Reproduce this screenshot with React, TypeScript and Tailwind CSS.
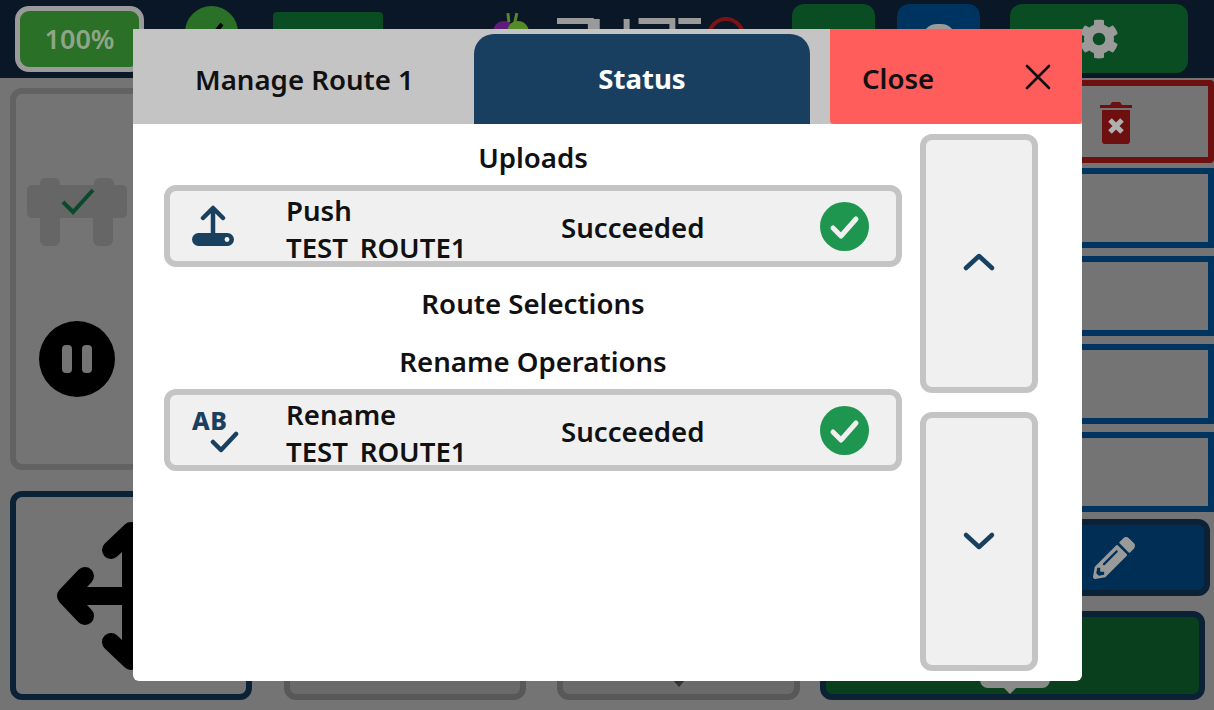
import { FaCog, FaPencilAlt } from "react-icons/fa";

const SANS = "font-['Noto_Sans',sans-serif]";

function CheckCircle() {
	return (
		<svg width="49" height="49" viewBox="0 0 49 49" aria-hidden="true">
			<circle cx="24.5" cy="24.5" r="24.5" fill="#1e9650" />
			<path d="M13 26l8 8 15-17" fill="none" stroke="#f0f0f0" strokeWidth="5" strokeLinecap="round" strokeLinejoin="round" />
		</svg>
	);
}

function UploadIcon() {
	return (
		<svg width="42" height="42" viewBox="0 0 42 42" aria-hidden="true">
			<path d="M21 28V4M11 13l10-10 10 10" fill="none" stroke="#1a4060" strokeWidth="4.5" strokeLinecap="round" strokeLinejoin="round" />
			<rect x="0" y="28" width="42" height="13" rx="6.5" fill="#1a4060" />
			<circle cx="35" cy="34.5" r="2.4" fill="#f0f0f0" />
		</svg>
	);
}

function RenameIcon() {
	return (
		<div className="relative h-[48px] w-[48px]">
			<span className="absolute left-0 top-[-1px] text-[25px] font-extrabold leading-[30px] tracking-[0.5px] text-[#1a4060]">AB</span>
			<svg className="absolute left-[18px] top-[24px]" width="30" height="24" viewBox="0 0 30 24" aria-hidden="true">
				<path d="M3 12l8 8L26 4" fill="none" stroke="#1a4060" strokeWidth="4.5" strokeLinecap="round" strokeLinejoin="round" />
			</svg>
		</div>
	);
}

function StatusRow({ icon, action }: { icon: React.ReactNode; action: string }) {
	return (
		<div className="flex h-[82px] items-center overflow-hidden rounded-[12px] border-[6px] border-[#c4c4c4] bg-[#f0f0f0]">
			<div className="flex w-[116px] justify-start pl-[22px]">{icon}</div>
			{/* the row cuts the second line off just under the letters */}
			<div className="h-[68px] w-[275px] self-start overflow-hidden text-[27.6px] font-semibold leading-[37px] text-[#111]">
				<div className="mt-[1px]">{action}</div>
				<div>TEST_ROUTE1</div>
			</div>
			<div className="mt-[2px] flex-1 text-[27.6px] font-semibold leading-[37px] text-[#111]">Succeeded</div>
			<div className="mr-[27px]">
				<CheckCircle />
			</div>
		</div>
	);
}

function ScrollButton({ d }: { d: string }) {
	return (
		<button className="flex h-[259px] w-[118px] items-center justify-center rounded-[12px] border-[6px] border-[#c4c4c4] bg-[#f0f0f0]">
			<svg width="34" height="24" viewBox="0 0 34 24" aria-hidden="true">
				<path d={d} fill="none" stroke="#1a4060" strokeWidth="4.5" strokeLinecap="round" strokeLinejoin="round" />
			</svg>
		</button>
	);
}

function Modal() {
	return (
		<div className="absolute left-[133px] top-[29px] flex h-[652px] w-[949px] flex-col overflow-hidden rounded-b-[6px] bg-white">
			<div className="flex h-[95px] items-end bg-[#c4c4c4]">
				<div className="flex h-[95px] w-[341px] items-center justify-center pl-[2px] pt-[6px] text-[27.6px] font-semibold text-[#111]">Manage Route 1</div>
				<div className="flex h-[90px] w-[336px] items-center justify-center rounded-t-[20px] bg-[#183f5f] text-[27.6px] font-bold text-white">Status</div>
				<div className="ml-[20px] flex h-[95px] w-[252px] items-center justify-between rounded-b-[4px] bg-[#ff5c5c] pl-[32px] pr-[31px] pt-[4px] text-[27.6px] font-semibold text-[#111]">
					<span>Close</span>
					<svg className="-mt-[4px]" width="26" height="26" viewBox="0 0 26 26" aria-hidden="true">
						<path d="M2 2l22 22M24 2L2 24" fill="none" stroke="#111" strokeWidth="2.6" strokeLinecap="round" />
					</svg>
				</div>
			</div>
			<div className="flex flex-1 pl-[31px]">
				<div className="w-[738px] pt-[14px] text-center text-[27.6px] font-semibold leading-[38px] text-[#111]">
					<div>Uploads</div>
					<div className="mt-[9px] text-left">
						<StatusRow icon={<UploadIcon />} action="Push" />
					</div>
					<div className="mt-[17px]">Route Selections</div>
					<div className="mt-[20px]">Rename Operations</div>
					<div className="mt-[9px] text-left">
						<StatusRow icon={<RenameIcon />} action="Rename" />
					</div>
				</div>
				<div className="ml-[18px] flex flex-col gap-[19px] pt-[10px]">
					<ScrollButton d="M4 16L17 4l13 12" />
					<ScrollButton d="M4 5l13 12L30 5" />
				</div>
			</div>
		</div>
	);
}

function TopBar() {
	return (
		<div className="flex h-[78px] items-start bg-[#091726]">
			<div className="ml-[15px] mt-[6px] flex h-[66px] w-[129px] items-center justify-center rounded-[14px] border-[5px] border-[#9a9a9a] bg-[#2a7026] text-[27px] font-semibold text-[#8fa58a]">100%</div>
			<div className="ml-[41px] mt-[6px] flex h-[53px] w-[53px] justify-center rounded-full bg-[#2a7026] pt-[14px]">
				<svg width="26" height="24" viewBox="0 0 26 24" aria-hidden="true">
					<path d="M3 13l7 7L23 4" fill="none" stroke="#000" strokeWidth="4" />
				</svg>
			</div>
			<div className="ml-[35px] mt-[12px] h-[50px] w-[110px] rounded-[4px] bg-[#0a4d22]" />
			<div className="ml-[107px] mt-[12px] flex w-[255px]">
				<svg width="42" height="40" viewBox="0 0 42 40" aria-hidden="true">
					<circle cx="14" cy="20" r="11" fill="#5e1b7a" />
					<circle cx="28" cy="20" r="11" fill="#558a28" />
					<path d="M19 10l-1-9M25 10l2-9" stroke="#558a28" strokeWidth="3" />
				</svg>
				{/* logo, only its top edge shows above the dialog */}
				<svg className="ml-[25px]" width="145" height="40" viewBox="0 0 145 40" aria-hidden="true">
					<path d="M0 9h34v30M40 7v30M70 7v30M82 9h34v30M122 9h23" fill="none" stroke="#9a9a9a" strokeWidth="6" />
				</svg>
				<div className="ml-[6px] mt-[5px] h-[38px] w-[38px] shrink-0 rounded-full border-[4px] border-[#7a1313]" />
			</div>
			<div className="ml-[47px] mt-[4px] h-[60px] w-[83px] rounded-[12px] bg-[#0a4d22]" />
			<div className="ml-[22px] mt-[4px] flex h-[60px] w-[83px] justify-center rounded-[12px] bg-[#003460] pt-[20px]">
				<div className="h-[30px] w-[34px] rounded-full bg-[#9a9a9a]" />
			</div>
			<div className="ml-[30px] mt-[4px] flex h-[69px] w-[178px] items-center justify-center rounded-[12px] bg-[#0a4d22] text-[#9a9a9a]">
				<FaCog size={40} />
			</div>
		</div>
	);
}

function Background() {
	return (
		<div className="flex h-[632px] bg-[#747474]">
			<div className="ml-[10px] flex w-[790px] flex-col pb-[10px] pt-[10px]">
				<div className="flex h-[382px] w-[500px] flex-col items-start rounded-[12px] border-[6px] border-[#626262] pl-[11px]">
					<svg className="mt-[84px]" width="100" height="68" viewBox="0 0 100 68" aria-hidden="true">
						<path d="M13 7a6 6 0 0 1 6-7h8a6 6 0 0 1 6 7h34a6 6 0 0 1 6-7h8a6 6 0 0 1 6 7h8a5 5 0 0 1 5 5v23a5 5 0 0 1-5 5H86v22a6 6 0 0 1-6 6h-8a6 6 0 0 1-6-6V40H33v22a6 6 0 0 1-6 6h-8a6 6 0 0 1-6-6V40H5a5 5 0 0 1-5-5V12a5 5 0 0 1 5-5z" fill="#666666" />
						<path d="M36 24l10 10 20-22" fill="none" stroke="#0a4a2c" strokeWidth="4" />
					</svg>
					<div className="ml-[12px] mt-[75px] flex h-[76px] w-[76px] items-center justify-center gap-[10px] rounded-full bg-black">
						<div className="h-[28px] w-[10px] rounded-[4px] bg-[#747474]" />
						<div className="h-[28px] w-[10px] rounded-[4px] bg-[#747474]" />
					</div>
				</div>
				<div className="mt-[21px] flex flex-1 items-end">
					<div className="flex h-[209px] w-[242px] items-center justify-center rounded-[12px] border-[6px] border-[#0a2136]">
						<svg width="150" height="150" viewBox="0 0 150 150" aria-hidden="true">
							<path d="M10 75h130M75 10v130M29 55L10 75l19 20M55 29L75 10l20 19M55 121l20 19 20-19M121 55l19 20-19 20" fill="none" stroke="#000" strokeWidth="18" strokeLinecap="round" strokeLinejoin="round" />
						</svg>
					</div>
					<div className="ml-[32px] h-[60px] w-[242px] rounded-[12px] border-[6px] border-[#585858] bg-[#6a6a6a]" />
					<div className="ml-[31px] flex h-[60px] w-[243px] items-end justify-center rounded-[12px] border-[6px] border-[#585858] bg-[#6a6a6a] pb-[7px]">
						<div className="h-0 w-0 border-x-[7px] border-t-[8px] border-x-transparent border-t-[#333]" />
					</div>
				</div>
			</div>
			<div className="ml-[20px] flex flex-1 flex-col pb-[10px] pt-[2px]">
				<div className="flex h-[83px] items-center justify-end rounded-[4px] border-[6px] border-[#6e1010] pr-[75px]">
					<svg width="34" height="44" viewBox="0 0 34 44" aria-hidden="true">
						<path d="M1 5h32v3H1zM11 5l2-3h8l2 3z" fill="#6e1010" />
						<path d="M3 10h28v31a3 3 0 0 1-3 3H6a3 3 0 0 1-3-3z" fill="#6e1010" />
						<path d="M11 20l12 12M23 20L11 32" stroke="#b0b0b0" strokeWidth="5" />
					</svg>
				</div>
				<div className="mt-[5px] h-[80px] border-[6px] border-[#003460]" />
				<div className="mt-[8px] h-[80px] border-[6px] border-[#003460]" />
				<div className="mt-[8px] h-[80px] border-[6px] border-[#003460]" />
				<div className="mt-[8px] h-[80px] border-[6px] border-[#003460]" />
				<div className="mr-[4px] mt-[7px] flex h-[77px] items-center justify-end rounded-[12px] border-[6px] border-[#0a2136] bg-[#002e55] pr-[69px] text-[#9a9a9a]">
					<FaPencilAlt size={42} />
				</div>
				<div className="mr-[9px] mt-[15px] flex h-[89px] items-end rounded-[12px] border-[6px] border-[#0a2136] bg-[#0a3f1e] pl-[154px]">
					<svg width="70" height="30" viewBox="0 0 70 30" aria-hidden="true">
						<path d="M0 8a8 8 0 0 1 8-8h54a8 8 0 0 1 8 8v8a8 8 0 0 1-8 8H36l-6 6-6-6H8a8 8 0 0 1-8-8z" fill="#8a8a8a" />
					</svg>
				</div>
			</div>
		</div>
	);
}

export default function App() {
	return (
		<div className={`relative h-[710px] w-[1214px] overflow-hidden ${SANS}`}>
			<TopBar />
			<Background />
			<Modal />
		</div>
	);
}
